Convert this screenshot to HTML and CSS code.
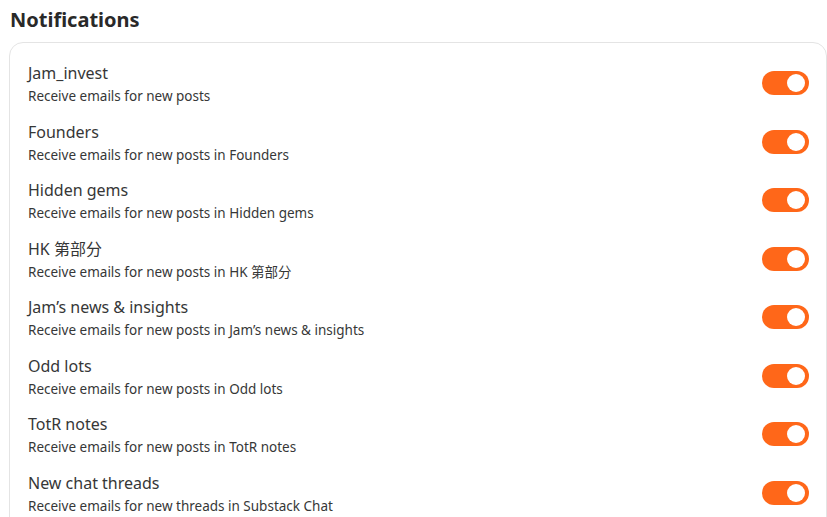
FILE: index.html
```html
<!DOCTYPE html>
<html lang="en">
<head>
    <meta charset="UTF-8">
    <meta name="viewport" content="width=device-width, initial-scale=1.0">
    <title>Notifications</title>
    <link rel="stylesheet" href="styles.css">
</head>
<body>
    <h1 class="page-title">Notifications</h1>
    <div class="card">
        <div class="row">
            <div class="text">
                <div class="name">Jam_invest</div>
                <div class="desc">Receive emails for new posts</div>
            </div>
            <label class="toggle"><input type="checkbox" checked><span class="slider"></span></label>
        </div>
        <div class="row">
            <div class="text">
                <div class="name">Founders</div>
                <div class="desc">Receive emails for new posts in Founders</div>
            </div>
            <label class="toggle"><input type="checkbox" checked><span class="slider"></span></label>
        </div>
        <div class="row">
            <div class="text">
                <div class="name">Hidden gems</div>
                <div class="desc">Receive emails for new posts in Hidden gems</div>
            </div>
            <label class="toggle"><input type="checkbox" checked><span class="slider"></span></label>
        </div>
        <div class="row">
            <div class="text">
                <div class="name">HK 第部分</div>
                <div class="desc">Receive emails for new posts in HK 第部分</div>
            </div>
            <label class="toggle"><input type="checkbox" checked><span class="slider"></span></label>
        </div>
        <div class="row">
            <div class="text">
                <div class="name">Jam’s news &amp; insights</div>
                <div class="desc">Receive emails for new posts in Jam’s news &amp; insights</div>
            </div>
            <label class="toggle"><input type="checkbox" checked><span class="slider"></span></label>
        </div>
        <div class="row">
            <div class="text">
                <div class="name">Odd lots</div>
                <div class="desc">Receive emails for new posts in Odd lots</div>
            </div>
            <label class="toggle"><input type="checkbox" checked><span class="slider"></span></label>
        </div>
        <div class="row">
            <div class="text">
                <div class="name">TotR notes</div>
                <div class="desc">Receive emails for new posts in TotR notes</div>
            </div>
            <label class="toggle"><input type="checkbox" checked><span class="slider"></span></label>
        </div>
        <div class="row">
            <div class="text">
                <div class="name">New chat threads</div>
                <div class="desc">Receive emails for new threads in Substack Chat</div>
            </div>
            <label class="toggle"><input type="checkbox" checked><span class="slider"></span></label>
        </div>
    </div>
</body>
</html>
```
FILE: styles.css
```css
body {
    margin: 0;
    padding: 0 0 0 9px;
    font-family: "Noto Sans", "Noto Sans CJK SC", sans-serif;
    background-color: #ffffff;
    color: #363737;
    overflow: hidden;
}
.page-title {
    margin: 0;
    padding: 5px 0 0 1px;
    height: 37px;
    font-size: 20px;
    font-weight: 700;
    line-height: 30px;
    color: #292929;
}
.card {
    border: 1px solid #e4e4e4;
    border-radius: 14px;
    padding: 19px 18px 18px 18px;
    display: flex;
    flex-direction: column;
    gap: 12.5px;
}
.row {
    display: flex;
    align-items: center;
    justify-content: space-between;
}
.name {
    font-size: 16px;
    line-height: 22px;
}
.desc {
    font-size: 13.5px;
    line-height: 24px;
}
.toggle {
    position: relative;
    width: 47px;
    height: 24px;
    margin-right: -1px;
    margin-bottom: 4px;
    flex-shrink: 0;
}
.toggle input {
    display: none;
}
.slider {
    position: absolute;
    inset: 0;
    background-color: #ff6719; /* substack orange */
    border-radius: 12px;
}
.slider::after {
    content: "";
    position: absolute;
    top: 3px;
    right: 4px;
    width: 18px;
    height: 18px;
    border-radius: 50%;
    background-color: #ffffff;
}
```
